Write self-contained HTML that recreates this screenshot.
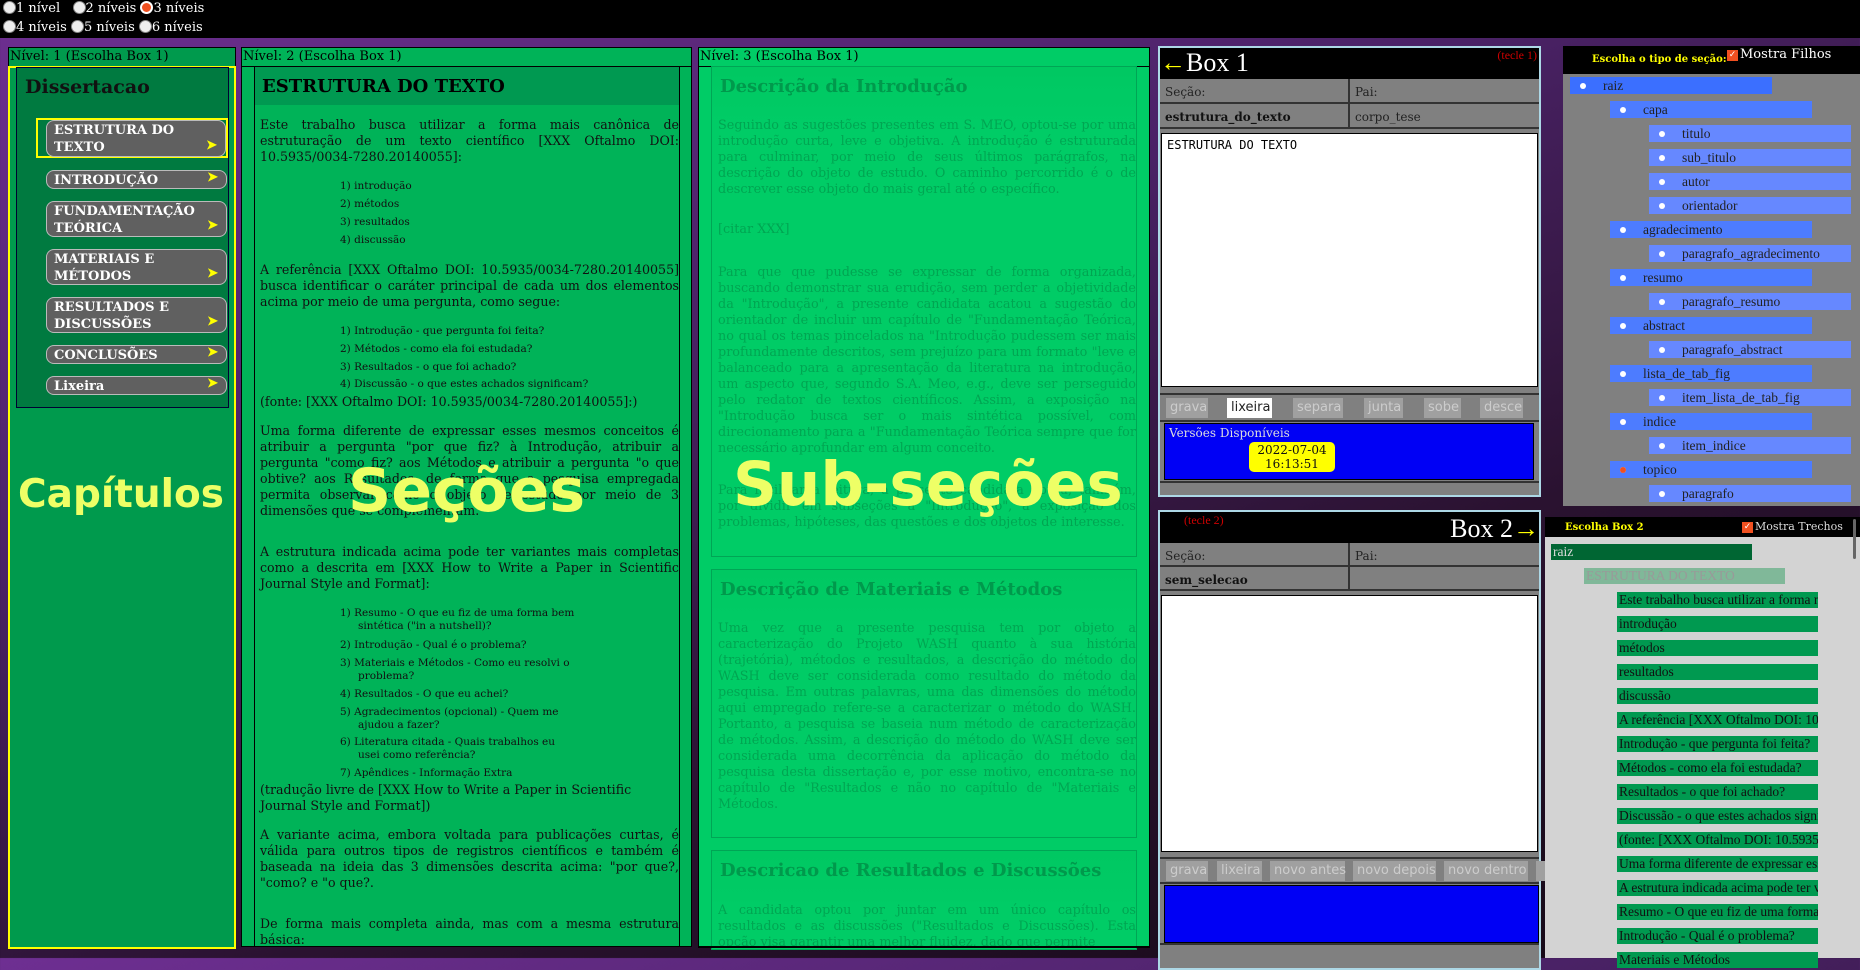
<!DOCTYPE html>
<html><head><meta charset="utf-8"><style>
*{box-sizing:border-box;margin:0;padding:0}
body{width:1860px;height:958px;overflow:hidden;position:relative;font-family:"DejaVu Serif",serif;background:linear-gradient(160deg,#6e2f92 0%,#4a2266 35%,#2a1230 65%,#120812 100%)}
.a{position:absolute}
#top{left:0;top:0;width:1860px;height:38px;background:#000;color:#fff;font-size:13px}
.rad{display:inline-block;width:13px;height:13px;border-radius:50%;background:#eee;border:1px solid #888;vertical-align:-2px}
.rad.on{background:#f05020;border:2px solid #fff}
.hdr{font-size:13px;color:#000;border-bottom:1px solid #000;padding-left:1px;height:19px;line-height:18px}
.btn{position:absolute;left:46px;width:181px;background:#606060;border:1px solid #bbb;border-radius:8px;color:#fff;font-weight:bold;font-size:13px;line-height:17px;padding:1px 30px 0 7px}
.btn i{position:absolute;right:8px;bottom:2px;color:#ff0;font-style:normal;font-size:13px}
.p2{font-size:12.6px;line-height:16px;text-align:justify;color:#111}
.li{font-size:10.5px;line-height:13px;color:#111;position:absolute;left:340px;width:240px;padding-left:18px;text-indent:-18px}
.p3{font-size:12.8px;line-height:16px;color:#00a552;text-align:justify}
.sec{position:absolute;left:711px;width:426px;border:1px solid #00a555;background:linear-gradient(#00c862,#00cc66 60px)}
.sec h3{font-size:18px;color:#00994c;padding:9px 8px;height:40px}
.big{font-family:"DejaVu Sans",sans-serif;font-weight:bold;color:#eeff66}
.box{background:#808080;border:2px solid #add8e6}
.row{position:absolute;left:0;width:100%;font-size:12px;color:#222;border-bottom:2px solid #333}
.row span{position:absolute;top:0;bottom:0;padding:6px 5px;border-right:2px solid #333}
.tb{position:absolute;font-family:"DejaVu Sans",sans-serif;font-size:13px;color:#ccc;background:#a0a0a0;padding:1px 4px;height:20px;line-height:18px;white-space:nowrap}
.t1{position:absolute;height:17px;font-family:"Liberation Serif",serif;font-size:13.5px;line-height:17px;color:#222;padding-left:33px}
.t1:before{content:"";position:absolute;left:10px;top:6px;width:6px;height:6px;border-radius:50%;background:#fff}
.t2{position:absolute;height:16px;font-family:"Liberation Serif",serif;font-size:13.5px;line-height:16px;color:#111;background:#009950;padding-left:2px;overflow:hidden;white-space:nowrap;width:201px}
</style></head><body>
<div id="top" class="a">
 <div class="a" style="left:3px;top:1px"><span class="rad"></span>1 nível&nbsp;&nbsp; <span class="rad"></span>2 níveis <span class="rad on"></span>3 níveis</div>
 <div class="a" style="left:3px;top:20px"><span class="rad"></span>4 níveis <span class="rad"></span>5 níveis <span class="rad"></span>6 níveis</div>
</div>

<!-- panel 1 -->
<div class="a" style="left:8px;top:47px;width:228px;height:902px;background:#009a4d;border:1px solid #000">
 <div class="hdr">Nível: 1 (Escolha Box 1)</div>
</div>
<div class="a" style="left:8px;top:66px;width:228px;height:883px;border:2px solid #ff0"></div>
<div class="a" style="left:16px;top:67px;width:213px;height:341px;background:#007a40;border:1px solid #003"></div>
<div class="a" style="left:25px;top:76px;font-size:19px;font-weight:bold;color:#111">Dissertacao</div>
<div class="a" style="left:36px;top:118px;width:192px;height:40px;border:2px solid #ff0"></div>
<div class="btn" style="top:120px;height:37px;left:46px;width:180px">ESTRUTURA DO TEXTO<i>➤</i></div>
<div class="btn" style="top:170px;height:19px">INTRODUÇÃO<i>➤</i></div>
<div class="btn" style="top:201px;height:36px">FUNDAMENTAÇÃO TEÓRICA<i>➤</i></div>
<div class="btn" style="top:249px;height:36px">MATERIAIS E MÉTODOS<i>➤</i></div>
<div class="btn" style="top:297px;height:36px">RESULTADOS E DISCUSSÕES<i>➤</i></div>
<div class="btn" style="top:345px;height:19px">CONCLUSÕES<i>➤</i></div>
<div class="btn" style="top:376px;height:19px">Lixeira<i>➤</i></div>

<!-- panel 2 -->
<div class="a" style="left:241px;top:47px;width:451px;height:900px;background:#00b358;border:1px solid #000;overflow:hidden">
 <div class="hdr">Nível: 2 (Escolha Box 1)</div>
 <div class="a" style="left:12px;top:19px;width:426px;height:900px;border-left:1px solid #000;border-right:1px solid #000"></div>
 <div class="a" style="left:13px;top:19px;width:424px;height:38px;background:#009951;font-size:18px;font-weight:bold;padding:9px 7px;color:#000">ESTRUTURA DO TEXTO</div>
</div>
<div class="a p2" style="left:260px;top:117px;width:419px">Este trabalho busca utilizar a forma mais canônica de estruturação de um texto científico [XXX Oftalmo DOI: 10.5935/0034-7280.20140055]:</div>
<div class="li" style="top:180px">1) introdução</div>
<div class="li" style="top:198px">2) métodos</div>
<div class="li" style="top:216px">3) resultados</div>
<div class="li" style="top:234px">4) discussão</div>
<div class="a p2" style="left:260px;top:262px;width:419px">A referência [XXX Oftalmo DOI: 10.5935/0034-7280.20140055] busca identificar o caráter principal de cada um dos elementos acima por meio de uma pergunta, como segue:</div>
<div class="li" style="top:325px">1) Introdução - que pergunta foi feita?</div>
<div class="li" style="top:343px">2) Métodos - como ela foi estudada?</div>
<div class="li" style="top:361px">3) Resultados - o que foi achado?</div>
<div class="li" style="top:378px;width:300px">4) Discussão - o que estes achados significam?</div>
<div class="a p2" style="left:260px;top:394px;width:419px">(fonte: [XXX Oftalmo DOI: 10.5935/0034-7280.20140055]:)</div>
<div class="a p2" style="left:260px;top:423px;width:419px">Uma forma diferente de expressar esses mesmos conceitos é atribuir a pergunta "por que fiz? à Introdução, atribuir a pergunta "como fiz? aos Métodos e atribuir a pergunta "o que obtive? aos Resultados, de forma que a pesquisa empregada permita observar como o objeto de estudo por meio de 3 dimensões que se complementam.</div>
<div class="a p2" style="left:260px;top:544px;width:419px">A estrutura indicada acima pode ter variantes mais completas como a descrita em [XXX How to Write a Paper in Scientific Journal Style and Format]:</div>
<div class="li" style="top:607px">1) Resumo - O que eu fiz de uma forma bem sintética ("in a nutshell)?</div>
<div class="li" style="top:639px">2) Introdução - Qual é o problema?</div>
<div class="li" style="top:657px">3) Materiais e Métodos - Como eu resolvi o problema?</div>
<div class="li" style="top:688px">4) Resultados - O que eu achei?</div>
<div class="li" style="top:706px">5) Agradecimentos (opcional) - Quem me ajudou a fazer?</div>
<div class="li" style="top:736px">6) Literatura citada - Quais trabalhos eu usei como referência?</div>
<div class="li" style="top:767px">7) Apêndices - Informação Extra</div>
<div class="a p2" style="left:260px;top:782px;width:419px;text-align:left">(tradução livre de [XXX How to Write a Paper in Scientific Journal Style and Format])</div>
<div class="a p2" style="left:260px;top:827px;width:419px">A variante acima, embora voltada para publicações curtas, é válida para outros tipos de registros científicos e também é baseada na ideia das 3 dimensões descrita acima: "por que?, "como? e "o que?.</div>
<div class="a p2" style="left:260px;top:916px;width:419px">De forma mais completa ainda, mas com a mesma estrutura básica:</div>

<!-- panel 3 -->
<div class="a" style="left:698px;top:47px;width:452px;height:900px;background:#00cc66;border:1px solid #000;overflow:hidden">
 <div class="hdr">Nível: 3 (Escolha Box 1)</div>
</div>
<div class="sec" style="top:66px;height:491px"><h3>Descrição da Introdução</h3></div>
<div class="a p3" style="left:718px;top:118px;width:418px">Seguindo as sugestões presentes em S. MEO, optou-se por uma introdução curta, leve e objetiva. A introdução é estruturada para culminar, por meio de seus últimos parágrafos, na descrição do objeto de estudo. O caminho percorrido é o de descrever esse objeto do mais geral até o específico.</div>
<div class="a p3" style="left:718px;top:222px">[citar XXX]</div>
<div class="a p3" style="left:718px;top:265px;width:418px">Para que que pudesse se expressar de forma organizada, buscando demonstrar sua erudição, sem perder a objetividade da "Introdução", a presente candidata acatou a sugestão do orientador de incluir um capítulo de "Fundamentação Teórica, no qual os temas pincelados na "Introdução pudessem ser mais profundamente descritos, sem prejuízo para um formato "leve e balanceado para a apresentação da literatura na introdução, um aspecto que, segundo S.A. Meo, e.g., deve ser perseguido pelo redator de textos científicos. Assim, a exposição na "Introdução busca ser o mais sintética possível, com direcionamento para a "Fundamentação Teórica sempre que for necessário aprofundar em algum conceito.</div>
<div class="a p3" style="left:718px;top:483px;width:418px">Para facilitar a leitura, a presente candidata optou, também, por dividir em subseções a "Introdução", a exposição dos problemas, hipóteses, das questões e dos objetos de interesse.</div>
<div class="sec" style="top:569px;height:269px"><h3>Descrição de Materiais e Métodos</h3></div>
<div class="a p3" style="left:718px;top:621px;width:418px">Uma vez que a presente pesquisa tem por objeto a caracterização do Projeto WASH quanto à sua história (trajetória), métodos e resultados, a descrição do método do WASH deve ser considerada como resultado do método da pesquisa. Em outras palavras, uma das dimensões do método aqui empregado refere-se a caracterizar o método do WASH. Portanto, a pesquisa se baseia num método de caracterização de métodos. Assim, a descrição do método do WASH deve ser considerada uma decorrência da aplicação do método da pesquisa desta dissertação e, por esse motivo, encontra-se no capítulo de "Resultados e não no capítulo de "Materiais e Métodos.</div>
<div class="sec" style="top:850px;height:100px"><h3>Descricao de Resultados e Discussões</h3></div>
<div class="a p3" style="left:718px;top:903px;width:418px;height:43px;overflow:hidden">A candidata optou por juntar em um único capítulo os resultados e as discussões ("Resultados e Discussões). Esta opção visa garantir uma melhor fluidez, dado que permite</div>
<div class="a" style="left:698px;top:946px;width:452px;height:2px;background:#000"></div>

<div class="a big" style="left:18px;top:472px;font-size:39px">Capítulos</div>
<div class="a big" style="left:348px;top:456px;font-size:60px">Seções</div>
<div class="a big" style="left:733px;top:449px;font-size:61px">Sub-seções</div>

<!-- Box 1 -->
<div class="a box" style="left:1158px;top:46px;width:383px;height:451px">
 <div class="a" style="left:0;top:0;width:379px;height:31px;background:#000;color:#fff;font-family:'Liberation Serif',serif;font-size:26px;line-height:30px"><span style="color:#ff0">←</span>Box 1<span class="a" style="right:2px;top:0;font-size:12px;line-height:14px;color:#c00">(tecle 1)</span></div>
 <div class="row" style="top:31px;height:25px"><span style="left:0;width:190px">Seção:</span><span style="left:190px;width:189px;border-right:0">Pai:</span></div>
 <div class="row" style="top:56px;height:25px"><span style="left:0;width:190px;font-weight:bold;color:#111">estrutura_do_texto</span><span style="left:190px;width:189px;border-right:0">corpo_tese</span></div>
 <div class="a" style="left:1px;top:85px;width:377px;height:254px;background:#fff;border:1px solid #000;font-family:'DejaVu Sans Mono',monospace;font-size:12px;padding:4px 5px;color:#000">ESTRUTURA DO TEXTO</div>
 <div class="a" style="left:0;top:345px;width:379px;height:2px;background:#333"></div>
 <div class="tb" style="left:6px;top:350px;width:42px">grava</div>
 <div class="tb" style="left:67px;top:350px;width:45px;background:#fff;color:#222">lixeira</div>
 <div class="tb" style="left:133px;top:350px;width:50px">separa</div>
 <div class="tb" style="left:204px;top:350px;width:39px">junta</div>
 <div class="tb" style="left:264px;top:350px;width:37px">sobe</div>
 <div class="tb" style="left:320px;top:350px;width:43px">desce</div>
 <div class="a" style="left:0;top:372px;width:379px;height:2px;background:#333"></div>
 <div class="a" style="left:4px;top:375px;width:370px;height:57px;background:#0000f5;border:1px solid #000;color:#ddd;font-size:12px;padding:2px 4px">Versões Disponíveis</div>
 <div class="a" style="left:89px;top:394px;width:86px;height:30px;background:#ff0;border-radius:5px;font-size:12px;line-height:14px;text-align:center;padding-top:1px;color:#111">2022-07-04<br>16:13:51</div>
 <div class="a" style="left:0;top:433px;width:379px;height:2px;background:#333"></div>
</div>

<!-- Tree 1 -->
<div class="a" style="left:1563px;top:46px;width:297px;height:460px;background:#808080">
 <div class="a" style="left:0;top:0;width:297px;height:28px;background:#000"></div>
 <div class="a" style="left:29px;top:8px;color:#ff0;font-size:10px;font-weight:bold">Escolha o tipo de seção:</div>
 <div class="a" style="left:164px;top:4px;width:11px;height:11px;background:#f05020;color:#fff;font-size:9px;line-height:11px;text-align:center">✓</div>
 <div class="a" style="left:177px;top:1px;color:#fff;font-size:13px">Mostra Filhos</div>
</div>
<div class="t1" style="left:1570px;top:77px;width:202px;background:#3b6fff">raiz</div>
<div class="t1" style="left:1610px;top:101px;width:202px;background:#4d7cff">capa</div>
<div class="t1" style="left:1649px;top:125px;width:202px;background:#6688ff">titulo</div>
<div class="t1" style="left:1649px;top:149px;width:202px;background:#6688ff">sub_titulo</div>
<div class="t1" style="left:1649px;top:173px;width:202px;background:#6688ff">autor</div>
<div class="t1" style="left:1649px;top:197px;width:202px;background:#6688ff">orientador</div>
<div class="t1" style="left:1610px;top:221px;width:202px;background:#4d7cff">agradecimento</div>
<div class="t1" style="left:1649px;top:245px;width:202px;background:#6688ff">paragrafo_agradecimento</div>
<div class="t1" style="left:1610px;top:269px;width:202px;background:#4d7cff">resumo</div>
<div class="t1" style="left:1649px;top:293px;width:202px;background:#6688ff">paragrafo_resumo</div>
<div class="t1" style="left:1610px;top:317px;width:202px;background:#4d7cff">abstract</div>
<div class="t1" style="left:1649px;top:341px;width:202px;background:#6688ff">paragrafo_abstract</div>
<div class="t1" style="left:1610px;top:365px;width:202px;background:#4d7cff">lista_de_tab_fig</div>
<div class="t1" style="left:1649px;top:389px;width:202px;background:#6688ff">item_lista_de_tab_fig</div>
<div class="t1" style="left:1610px;top:413px;width:202px;background:#4d7cff">indice</div>
<div class="t1" style="left:1649px;top:437px;width:202px;background:#6688ff">item_indice</div>
<div class="t1" style="left:1610px;top:461px;width:202px;background:#4d7cff">topico</div>
<div class="a" style="left:1620px;top:467px;width:6px;height:6px;border-radius:50%;background:#f05020"></div>
<div class="t1" style="left:1649px;top:485px;width:202px;background:#6688ff">paragrafo</div>

<!-- Box 2 -->
<div class="a box" style="left:1158px;top:510px;width:383px;height:460px">
 <div class="a" style="left:0;top:0;width:379px;height:31px;background:#000;color:#fff;font-family:'Liberation Serif',serif;font-size:26px;line-height:34px;text-align:right">Box 2<span style="color:#ff0">→</span><span class="a" style="left:24px;top:1px;font-size:12px;line-height:14px;color:#c00">(tecle 2)</span></div>
 <div class="row" style="top:31px;height:24px"><span style="left:0;width:190px">Seção:</span><span style="left:190px;width:189px;border-right:0">Pai:</span></div>
 <div class="row" style="top:55px;height:24px"><span style="left:0;width:190px;font-weight:bold;color:#111">sem_selecao</span><span style="left:190px;width:189px;border-right:0"></span></div>
 <div class="a" style="left:1px;top:83px;width:377px;height:257px;background:#fff;border:1px solid #000"></div>
 <div class="a" style="left:0;top:345px;width:379px;height:2px;background:#333"></div>
 <div class="tb" style="left:6px;top:349px;width:42px">grava</div>
 <div class="tb" style="left:57px;top:349px;width:45px">lixeira</div>
 <div class="tb" style="left:110px;top:349px;width:75px">novo antes</div>
 <div class="tb" style="left:193px;top:349px;width:83px">novo depois</div>
 <div class="tb" style="left:284px;top:349px;width:84px">novo dentro</div>
 <div class="tb" style="left:376px;top:349px;width:10px"></div>
 <div class="a" style="left:0;top:370px;width:379px;height:2px;background:#333"></div>
 <div class="a" style="left:4px;top:373px;width:375px;height:58px;background:#0000f5;border:1px solid #000"></div>
 <div class="a" style="left:0;top:431px;width:379px;height:2px;background:#333"></div>
</div>

<!-- Tree 2 -->
<div class="a" style="left:1545px;top:517px;width:315px;height:441px;background:#d3d3d3;overflow:hidden">
 <div class="a" style="left:0;top:0;width:315px;height:20px;background:#000"></div>
 <div class="a" style="left:20px;top:5px;color:#ff0;font-size:10px;font-weight:bold">Escolha Box 2</div>
 <div class="a" style="left:197px;top:5px;width:11px;height:11px;background:#f05020;color:#fff;font-size:9px;line-height:11px;text-align:center">✓</div>
 <div class="a" style="left:210px;top:3px;color:#ddd;font-size:11px">Mostra Trechos</div>
 <div class="a" style="left:308px;top:2px;width:3px;height:40px;background:#666;border-radius:2px"></div>
</div>
<div class="t2" style="left:1551px;top:544px;background:#006633;color:#ddd">raiz</div>
<div class="t2" style="left:1584px;top:568px;background:#80b899;color:#999">ESTRUTURA DO TEXTO</div>
<div class="t2" style="left:1617px;top:592px">Este trabalho busca utilizar a forma mais canônica</div>
<div class="t2" style="left:1617px;top:616px">introdução</div>
<div class="t2" style="left:1617px;top:640px">métodos</div>
<div class="t2" style="left:1617px;top:664px">resultados</div>
<div class="t2" style="left:1617px;top:688px">discussão</div>
<div class="t2" style="left:1617px;top:712px">A referência [XXX Oftalmo DOI: 10.5935</div>
<div class="t2" style="left:1617px;top:736px">Introdução - que pergunta foi feita?</div>
<div class="t2" style="left:1617px;top:760px">Métodos - como ela foi estudada?</div>
<div class="t2" style="left:1617px;top:784px">Resultados - o que foi achado?</div>
<div class="t2" style="left:1617px;top:808px">Discussão - o que estes achados significam?</div>
<div class="t2" style="left:1617px;top:832px">(fonte: [XXX Oftalmo DOI: 10.5935/0034</div>
<div class="t2" style="left:1617px;top:856px">Uma forma diferente de expressar esses</div>
<div class="t2" style="left:1617px;top:880px">A estrutura indicada acima pode ter variantes</div>
<div class="t2" style="left:1617px;top:904px">Resumo - O que eu fiz de uma forma bem</div>
<div class="t2" style="left:1617px;top:928px">Introdução - Qual é o problema?</div>
<div class="t2" style="left:1617px;top:952px">Materiais e Métodos</div>
</body></html>
